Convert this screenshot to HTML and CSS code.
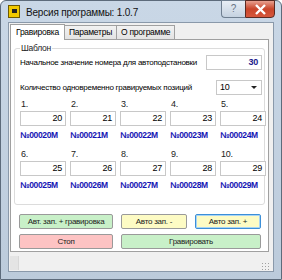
FILE: index.html
```
<!DOCTYPE html>
<html lang="ru">
<head>
    <meta charset="UTF-8">
    <title>Версия программы: 1.0.7</title>
    <link rel="stylesheet" href="styles.css">
</head>
<body>
    <div class="window">
        <div class="titlebar">
            <div class="app-icon"><span></span></div>
            <div class="title">Версия программы: 1.0.7</div>
            <div class="caption-btns">
                <div class="cap-help">?</div>
                <div class="cap-close">
                    <svg width="13" height="11" viewBox="0 0 13 11"><path d="M2 1 L11 10 M11 1 L2 10" stroke="#fff" stroke-width="2.4" fill="none"/></svg>
                </div>
            </div>
        </div>
        <div class="client">
            <div class="tabs">
                <div class="tab active">Гравировка</div>
                <div class="tab">Параметры</div>
                <div class="tab">О программе</div>
            </div>
            <div class="page">
                <div class="group">
                    <div class="legend">Шаблон</div>
                    <div class="row">
                        <span>Начальное значение номера для автоподстановки</span>
                        <div class="field start">30</div>
                    </div>
                    <div class="row">
                        <span>Количество одновременно гравируемых позиций</span>
                        <div class="combo">10<span class="arrow"></span></div>
                    </div>
                    <div class="grid" id="grid"></div>
                </div>
                <div class="buttons">
                    <div class="btn green wide">Авт. зап. + гравировка</div>
                    <div class="btn yellow">Авто зап. -</div>
                    <div class="btn yellow focus">Авто зап. +</div>
                    <div class="btn pink wide">Стоп</div>
                    <div class="btn green span2">Гравировать</div>
                </div>
            </div>
            <div class="statusbar">
                <div class="status-cell"></div>
                <div class="grip"></div>
            </div>
        </div>
    </div>
    <script>
        const grid = document.getElementById('grid');
        for (let i = 0; i < 10; i++) {
            const val = 20 + i;
            const cell = document.createElement('div');
            cell.className = 'cell';
            cell.innerHTML = `
                <div class="num">${i + 1}.</div>
                <div class="field">${val}</div>
                <div class="code">№000${val}M</div>
            `;
            grid.appendChild(cell);
        }
    </script>
</body>
</html>
```

FILE: styles.css
```
body {
    margin: 0;
    font-family: "Liberation Sans", Arial, sans-serif;
    font-size: 8px;
    letter-spacing: -0.25px;
    color: #000;
}

.window {
    width: 282px;
    height: 280px;
    box-sizing: border-box;
    background: linear-gradient(to bottom, #c9d7e6, #bccbdb);
    border: 1px solid #5d6b7b;
    border-radius: 6px 6px 0 0;
    display: flex;
    flex-direction: column;
}

.titlebar {
    height: 21px;
    display: flex;
    align-items: center;
    padding-left: 7px;
}

.app-icon {
    width: 10px;
    height: 11px;
    background: #f0c800;
    border: 1px solid #6e5a00;
    display: flex;
    align-items: center;
    justify-content: center;
}

.app-icon span {
    width: 5px;
    height: 4px;
    background: #222;
    margin-top: -2px;
}

.title {
    font-size: 10px;
    letter-spacing: -0.2px;
    margin-left: 6px;
    margin-top: 1px;
    color: #111;
}

.caption-btns {
    margin-left: auto;
    margin-right: 6px;
    align-self: flex-start;
    display: flex;
    margin-top: -1px;
}

.cap-help {
    width: 24px;
    height: 18px;
    box-sizing: border-box;
    border: 1px solid #6f7f90;
    border-right: none;
    border-radius: 0 0 0 4px;
    background: linear-gradient(to bottom, #e8eef5, #c5d2e0);
    color: #6a7686;
    font-size: 10px;
    text-align: center;
    line-height: 16px;
}

.cap-close {
    width: 30px;
    height: 18px;
    box-sizing: border-box;
    border: 1px solid #5a2a22;
    border-radius: 0 0 4px 0;
    background: linear-gradient(to bottom, #e8a08f, #c9452a 50%, #d6573c);
    display: flex;
    align-items: center;
    justify-content: center;
}

.client {
    margin: 0 7px 7px 7px;
    flex: 1;
    background: #f0f0f0;
    border: 1px solid #8a99aa;
    display: flex;
    flex-direction: column;
    padding: 1px 4px 0 1px;
}

.tabs {
    display: flex;
    align-items: flex-end;
    height: 15px;
    padding-left: 1px;
}

.tab {
    height: 13px;
    padding: 0 4px;
    line-height: 13px;
    font-size: 8.5px;
    border: 1px solid #a0a0a0;
    border-bottom: none;
    background: linear-gradient(to bottom, #f2f2f2, #e3e3e3);
    margin-left: -1px;
}

.tab.active {
    height: 15px;
    line-height: 14px;
    background: #fff;
    position: relative;
    z-index: 1;
    margin-bottom: -1px;
    padding: 0 5px;
}

.page {
    background: #fff;
    border: 1px solid #a0a0a0;
    height: 213px;
    box-sizing: border-box;
    padding: 8px 3px 0 3px;
}

.group {
    border: 1px solid #dcdcdc;
    border-radius: 3px;
    height: 157px;
    box-sizing: border-box;
    position: relative;
    padding: 6px 1px 0 5px;
}

.legend {
    position: absolute;
    top: -6px;
    left: 5px;
    background: #fff;
    padding: 0 1px;
    font-size: 8.5px;
    color: #222;
}

.row {
    display: flex;
    align-items: center;
    justify-content: space-between;
    height: 15px;
    margin-bottom: 10px;
    padding-right: 1px;
}

.row + .row {
    margin-bottom: 3px;
}

.field {
    box-sizing: border-box;
    border: 1px solid #c8c8c8;
    height: 15px;
    line-height: 13px;
    text-align: right;
    padding-right: 3px;
    background: #fff;
    font-size: 9px;
}

.field.start {
    width: 56px;
    color: #1a1a8c;
    font-weight: bold;
}

.combo {
    width: 46px;
    height: 15px;
    box-sizing: border-box;
    border: 1px solid #c8c8c8;
    padding-left: 3px;
    line-height: 13px;
    position: relative;
    font-size: 9px;
}

.combo .arrow {
    position: absolute;
    right: 4px;
    top: 5px;
    border-left: 3px solid transparent;
    border-right: 3px solid transparent;
    border-top: 3px solid #222;
}

.grid {
    display: grid;
    grid-template-columns: repeat(5, 46px);
    column-gap: 4px;
    row-gap: 8px;
}

.num {
    height: 12px;
    line-height: 12px;
    color: #222;
    padding-left: 1px;
    font-size: 9px;
}

.cell .field {
    margin-top: 1px;
}

.code {
    margin-top: 4px;
    font-size: 8.5px;
    font-weight: bold;
    letter-spacing: -0.35px;
    color: #1414b4;
    white-space: nowrap;
}

.buttons {
    display: grid;
    grid-template-columns: 94px 66px 66px;
    column-gap: 8px;
    row-gap: 5px;
    margin-top: 9px;
    padding-left: 5px;
}

.btn {
    height: 15px;
    box-sizing: border-box;
    border: 1px solid #9a9a9a;
    border-radius: 2px;
    text-align: center;
    line-height: 13px;
    color: #222;
}

.btn.green { background: #c8f0c8; }
.btn.yellow { background: #fdfbc4; }
.btn.pink { background: #fdc3c3; }

.btn.focus {
    border-color: #3c8fd8;
    box-shadow: inset 0 0 0 1px #a8d4f4;
}

.btn.span2 {
    grid-column: span 2;
}

.statusbar {
    flex: 1;
    display: flex;
    align-items: flex-end;
    justify-content: space-between;
    padding: 0 0 1px 0;
}

.status-cell {
    width: 8px;
    height: 14px;
    background: #e4e4e4;
    border-right: 1px solid #d8d8d8;
}

.grip {
    width: 8px;
    height: 8px;
    background-image: radial-gradient(circle, #a0a0a0 0.8px, transparent 1px);
    background-size: 3px 3px;
}
```
